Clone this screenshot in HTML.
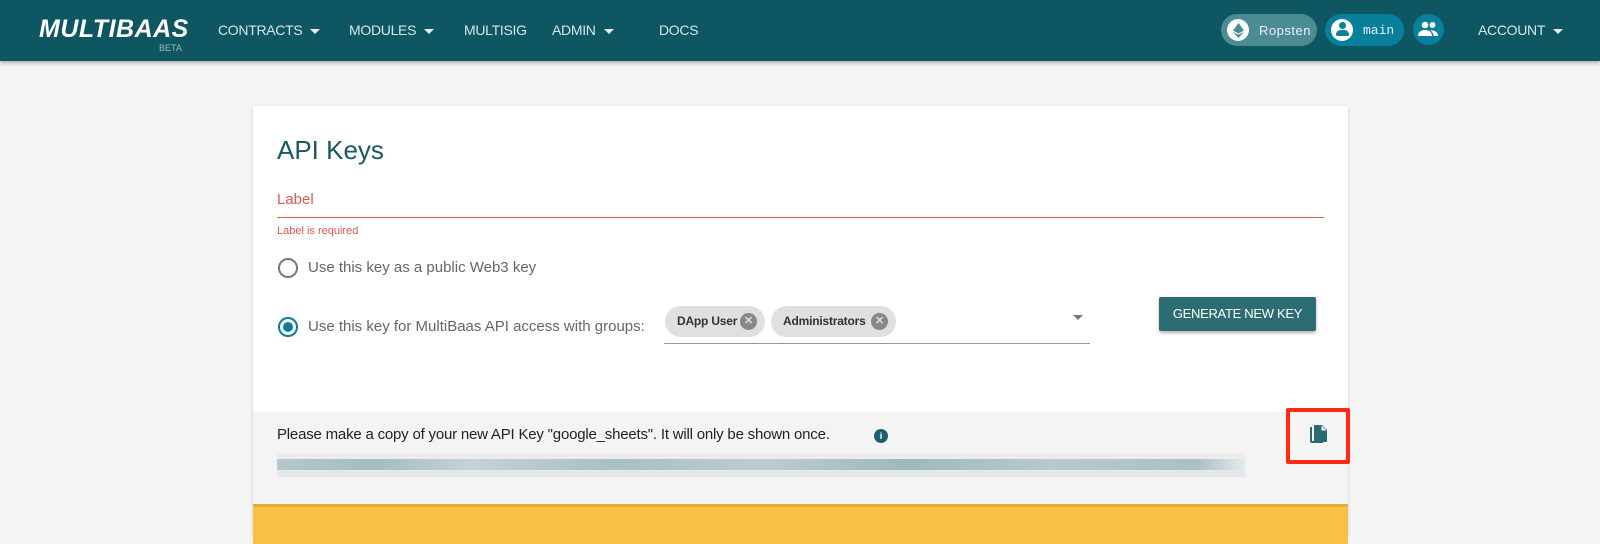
<!DOCTYPE html>
<html><head><meta charset="utf-8"><style>
*{margin:0;padding:0;box-sizing:border-box}
body{width:1600px;height:518px;overflow:hidden;background:#f5f5f5;font-family:"Liberation Sans",sans-serif;position:relative}
.nav{position:absolute;left:0;top:0;width:1600px;height:61px;background:#0e5661;box-shadow:0 2px 4px rgba(0,0,0,.3)}
.a{position:absolute}
.ni{position:absolute;top:22px;color:#d5e6e8;font-size:14px;letter-spacing:-0.3px}
.tri{display:inline-block;width:0;height:0;border-left:5px solid transparent;border-right:5px solid transparent;border-top:5px solid #e8f0f0;margin-left:8px;vertical-align:middle}
.card{position:absolute;left:253px;top:106px;width:1095px;height:430px;background:#fff;box-shadow:0 1px 4px rgba(0,0,0,.15)}
.chip{position:absolute;height:31px;border-radius:16px;background:#e0e0e0;font-size:12px;color:#333;font-weight:bold;line-height:31px;padding-left:12px;letter-spacing:-0.2px}
.x{position:absolute;right:8px;top:7px;width:17px;height:17px;border-radius:50%;background:#888;color:#e0e0e0;font-size:11px;line-height:17px;text-align:center}
</style></head><body>
<div class="nav">
 <div class="a" style="left:39px;top:15px;color:#fff;font-size:25px;font-weight:bold;font-style:italic;letter-spacing:0.5px">MULTIBAAS</div>
 <div class="a" style="left:159px;top:43px;color:#9bb;font-size:9px">BETA</div>
 <div class="ni" style="left:218px">CONTRACTS<span class="tri"></span></div>
 <div class="ni" style="left:349px">MODULES<span class="tri"></span></div>
 <div class="ni" style="left:464px">MULTISIG</div>
 <div class="ni" style="left:552px">ADMIN<span class="tri"></span></div>
 <div class="ni" style="left:659px">DOCS</div>
 <div class="a" style="left:1221px;top:14px;width:96px;height:32px;border-radius:16px;background:#4b8b93">
  <div class="a" style="left:6px;top:5px;width:22px;height:22px;border-radius:50%;background:#fff"></div>
  <svg class="a" style="left:10.5px;top:8.5px" width="13" height="15" viewBox="0 0 13 15"><path d="M6.5 0L1 7.5 6.5 10.5 12 7.5Z M1 8.7L6.5 15 12 8.7 6.5 11.8Z" fill="#4b8b93"/></svg>
  <div class="a" style="left:38px;top:9px;color:#eef;font-size:13px;letter-spacing:0.5px">Ropsten</div>
 </div>
 <div class="a" style="left:1325px;top:14px;width:79px;height:32px;border-radius:16px;background:#087f9b">
  <div class="a" style="left:6px;top:5px;width:22px;height:22px;border-radius:50%;background:#fff"></div>
  <div class="a" style="left:13.5px;top:8px;width:7px;height:7px;border-radius:50%;background:#087f9b"></div>
  <div class="a" style="left:10.5px;top:16px;width:13px;height:6px;border-radius:6px 6px 2px 2px;background:#087f9b"></div>
  <div class="a" style="left:38px;top:9px;color:#eef;font-size:13px;font-family:'Liberation Mono',monospace">main</div>
 </div>
 <div class="a" style="left:1413px;top:14px;width:31px;height:31px;border-radius:50%;background:#087f9b">
  <svg class="a" style="left:5px;top:7px" width="21" height="16" viewBox="0 0 21 16"><circle cx="7" cy="4" r="3.3" fill="#fff"/><circle cx="14.5" cy="4" r="3" fill="#fff"/><path d="M0 15c0-4 3-6 7-6s7 2 7 6z M12 9.3c4-.5 8 1.5 8 5.7h-4.5c0-2.5-1.5-4.5-3.5-5.7z" fill="#fff"/></svg>
 </div>
 <div class="ni" style="left:1478px">ACCOUNT<span class="tri"></span></div>
</div>

<div class="card">
 <div class="a" style="left:24px;top:29px;font-size:26px;color:#175a62;font-weight:500">API Keys</div>
 <div class="a" style="left:24px;top:85px;font-size:15px;color:#e0584f">Label</div>
 <div class="a" style="left:24px;top:111px;width:1047px;height:1px;background:#e0584f"></div>
 <div class="a" style="left:24px;top:119px;font-size:11px;color:#e0584f">Label is required</div>
 <div class="a" style="left:25px;top:152px;width:20px;height:20px;border-radius:50%;border:2px solid #777"></div>
 <div class="a" style="left:55px;top:153px;font-size:15px;color:#666">Use this key as a public Web3 key</div>
 <div class="a" style="left:25px;top:211px;width:20px;height:20px;border-radius:50%;border:2px solid #0c7e99"><div class="a" style="left:3px;top:3px;width:10px;height:10px;border-radius:50%;background:#0c7e99"></div></div>
 <div class="a" style="left:55px;top:212px;font-size:15px;color:#666">Use this key for MultiBaas API access with groups:</div>
 <div class="chip" style="left:412px;top:200px;width:100px">DApp User<span class="x">✕</span></div>
 <div class="chip" style="left:518px;top:200px;width:125px">Administrators<span class="x">✕</span></div>
 <div class="a" style="left:411px;top:237px;width:426px;height:1px;background:#999"></div>
 <div class="a" style="left:820px;top:209px;width:0;height:0;border-left:5px solid transparent;border-right:5px solid transparent;border-top:5px solid #777"></div>
 <div class="a" style="left:906px;top:191px;width:157px;height:34px;background:#2d6c72;border-radius:2px;box-shadow:0 2px 3px rgba(0,0,0,.3);color:#fff;font-size:13px;font-weight:500;text-align:center;line-height:34px;letter-spacing:-0.3px">GENERATE NEW KEY</div>
 <div class="a" style="left:0;top:306px;width:1095px;height:92px;background:#f4f4f4">
  <div class="a" style="left:24px;top:14px;font-size:15px;color:#222;letter-spacing:-0.2px">Please make a copy of your new API Key "google_sheets". It will only be shown once.</div>
  <div class="a" style="left:621px;top:17px;width:14px;height:14px;border-radius:50%;background:#1e6069;color:#fff;font-size:9px;font-weight:bold;text-align:center;line-height:14px">i</div>
  <div class="a" style="left:24px;top:41px;width:968px;height:7px;background:#ececec"></div>
  <div class="a" style="left:24px;top:47px;width:968px;height:11px;background:linear-gradient(90deg,#b4c8cd,#a4bcc2 10%,#c4d3d7 20%,#a8bfc5 35%,#bccdd1 50%,#9fb8bf 65%,#b7cace 80%,#aac0c6 95%,#e5eaeb)"></div>
  <div class="a" style="left:24px;top:58px;width:968px;height:7px;background:#e6e9ea"></div>
 </div>
 <div class="a" style="left:0;top:398px;width:1095px;height:40px;background:#f8c146;border-top:3px solid #e2ad3c"></div>
</div>
<div class="a" style="left:1286px;top:408px;width:64px;height:56px;border:4px solid #ff2a10;border-radius:2px"></div>
<svg class="a" style="left:1308px;top:424px" width="20" height="22" viewBox="0 0 20 22"><path d="M2 3h2v14h11v2H4a2 2 0 0 1-2-2z" fill="#2c6a72"/><path d="M6 2a1 1 0 0 1 1-1h7l5 5v11a1 1 0 0 1-1 1H7a1 1 0 0 1-1-1z" fill="#2c6a72"/><path d="M13.5 1.5v5h5" fill="#fff"/></svg>
</body></html>
